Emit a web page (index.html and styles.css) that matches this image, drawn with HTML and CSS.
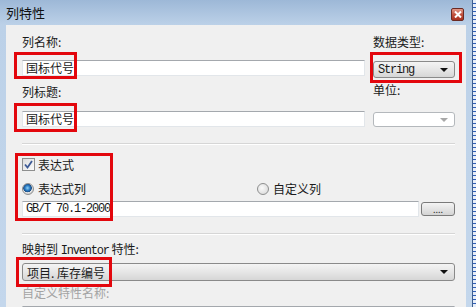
FILE: index.html
```html
<!DOCTYPE html>
<html lang="zh-CN">
<head>
    <meta charset="UTF-8">
    <title>列特性</title>
    <link rel="stylesheet" href="styles.css">
</head>
<body>
    <div class="screen">
        <div class="window">
            <div class="titlebar">
                <span class="title">列特性</span>
                <span class="close">
                    <svg width="8" height="7" viewBox="0 0 8 7"><path d="M1 0.5 L7 6.5 M7 0.5 L1 6.5" stroke="#fff" stroke-width="2"/></svg>
                </span>
            </div>
            <div class="client">
                <div class="top-grid">
                    <div class="col">
                        <div class="label">列名称:</div>
                        <div class="textbox name-box">国标代号</div>
                        <div class="label title-label">列标题:</div>
                        <div class="textbox caption-box">国标代号</div>
                    </div>
                    <div class="col">
                        <div class="label">数据类型:</div>
                        <div class="combo type-combo"><span class="mono">String</span><span class="arrow"></span></div>
                        <div class="label unit-label">单位:</div>
                        <div class="combo disabled unit-combo"><span></span><span class="arrow"></span></div>
                    </div>
                </div>

                <div class="sep"></div>

                <div class="expr">
                    <div class="check-row">
                        <span class="checkbox">
                            <svg width="9" height="9" viewBox="0 0 9 9"><path d="M1 4.5 L3.5 7.5 L8 1" fill="none" stroke="#3d5a96" stroke-width="1.8"/></svg>
                        </span>
                        <span>表达式</span>
                    </div>
                    <div class="radio-row">
                        <div class="radio-item"><span class="radio on"></span><span>表达式列</span></div>
                        <div class="radio-item"><span class="radio"></span><span>自定义列</span></div>
                    </div>
                    <div class="expr-input">
                        <div class="textbox mono">GB/T 70.1-2000</div>
                        <div class="dots-btn">....</div>
                    </div>
                </div>

                <div class="sep second"></div>

                <div class="map">
                    <div class="label">映射到 <span class="mono">Inventor</span> 特性:</div>
                    <div class="combo map-combo"><span>项目. 库存编号</span><span class="arrow"></span></div>
                    <div class="label muted">自定义特性名称:</div>
                    <div class="textbox last-box"></div>
                </div>
            </div>
        </div>
        <div class="behind"></div>

        <div class="mark mark-name"></div>
        <div class="mark mark-caption"></div>
        <div class="mark mark-type"></div>
        <div class="mark mark-expr"></div>
        <div class="mark mark-map"></div>
    </div>
</body>
</html>
```

FILE: styles.css
```css
* {
    margin: 0;
    padding: 0;
    box-sizing: border-box;
}

body {
    width: 476px;
    height: 307px;
    overflow: hidden;
    font-family: "Noto Sans CJK SC", "DejaVu Sans", sans-serif;
    font-size: 12px;
    color: #1a1a1a;
}

.screen {
    position: relative;
    display: flex;
    height: 307px;
}

.window {
    width: 472px;
    padding: 0 6px;
    display: flex;
    flex-direction: column;
    background: linear-gradient(#9db8d7 0, #bcd1e8 25px, #c4d7ec 100%);
}

.titlebar {
    height: 25px;
    display: flex;
    align-items: center;
    justify-content: space-between;
}

.title {
    font-size: 13px;
    color: #111;
    line-height: 16px;
}

.close {
    width: 13px;
    height: 13px;
    margin-right: 2px;
    margin-top: 3px;
    display: flex;
    align-items: center;
    justify-content: center;
    border: 1px solid #6b2a22;
    border-radius: 2px;
    background: linear-gradient(#e29a8a, #c2523f 50%, #a8301f);
}

.client {
    flex: 1;
    background: #f0f0f0;
    padding: 9px 11px 0 16px;
    overflow: hidden;
}

.label {
    height: 16px;
    line-height: 16px;
    white-space: nowrap;
}

.mono {
    font-family: "Liberation Mono", "DejaVu Sans Mono", monospace;
    font-size: 12px;
    letter-spacing: -1.2px;
}

.muted {
    color: #a3a3a3;
}

.top-grid {
    display: grid;
    grid-template-columns: 343px 1fr;
    column-gap: 8px;
}

.col {
    display: flex;
    flex-direction: column;
}

.textbox {
    height: 16px;
    line-height: 14px;
    padding-left: 3px;
    background: #fff;
    border: 1px solid #e2e6ea;
    border-top-color: #a4a8ad;
    white-space: nowrap;
}

.name-box {
    margin-top: 10px;
}

.title-label {
    margin-top: 8px;
}

.caption-box {
    margin-top: 11px;
}

.combo {
    height: 17px;
    display: flex;
    align-items: center;
    justify-content: space-between;
    padding: 0 6px 0 4px;
    border: 1px solid #8a8a8a;
    border-radius: 3px;
    background: linear-gradient(#f4f4f4, #e6e6e6 50%, #d6d6d6);
}

.arrow {
    width: 0;
    height: 0;
    border-left: 4px solid transparent;
    border-right: 4px solid transparent;
    border-top: 4px solid #111;
}

.type-combo {
    margin-top: 11px;
}

.unit-label {
    margin-top: 4px;
}

.unit-combo {
    margin-top: 14px;
    height: 15px;
}

.combo.disabled {
    background: #fff;
    border-color: #b4b8bc;
}

.combo.disabled .arrow {
    border-top-color: #a8a8a8;
}

.sep {
    margin-top: 16px;
    border-top: 1px solid #d6d6d6;
    border-bottom: 1px solid #fff;
}

.expr {
    display: flex;
    flex-direction: column;
}

.check-row {
    margin-top: 13px;
    height: 13px;
    display: flex;
    align-items: center;
    gap: 3px;
    line-height: 13px;
}

.checkbox {
    width: 13px;
    height: 13px;
    display: flex;
    align-items: center;
    justify-content: center;
    border: 1px solid #8e8f8f;
    background: linear-gradient(135deg, #dcdcdc, #fbfbfb);
}

.radio-row {
    margin-top: 11px;
    height: 13px;
    display: grid;
    grid-template-columns: 235px 1fr;
}

.radio-item {
    display: flex;
    align-items: center;
    gap: 4px;
    line-height: 13px;
}

.radio {
    width: 12px;
    height: 12px;
    border-radius: 50%;
    border: 1px solid #8e8f8f;
    background: radial-gradient(circle at 40% 40%, #fafafa, #d4d4d4);
}

.radio.on {
    background: radial-gradient(circle at 45% 40%, #8fd2f6 0, #2a7bc4 2.5px, #1c4f86 4px, #e6e6e6 4.6px, #cfcfcf 6px);
}

.expr-input {
    margin-top: 6px;
    display: flex;
    align-items: center;
    gap: 2px;
}

.expr-input .textbox {
    flex: 1;
    line-height: 15px;
}

.dots-btn {
    width: 34px;
    height: 14px;
    font-size: 9px;
    line-height: 14px;
    text-align: center;
    color: #333;
    border: 1px solid #7a7a7a;
    border-radius: 3px;
    background: linear-gradient(#f4f4f4, #e4e4e4 50%, #d4d4d4);
}

.sep.second {
    margin-top: 16px;
}

.map {
    display: flex;
    flex-direction: column;
}

.map .label:first-child {
    margin-top: 6px;
}

.map-combo {
    margin-top: 6px;
    height: 18px;
}

.map .muted {
    margin-top: 4px;
}

.last-box {
    margin-top: 5px;
}

.behind {
    flex: 1;
    border-left: 1px solid #3f5f8f;
    background: repeating-linear-gradient(#e8eef8 0, #e8eef8 3px, #2f5fb8 3px, #2f5fb8 4px);
}

/* red annotation boxes drawn over the dialog */
.mark {
    position: absolute;
    border: 3px solid #e3070d;
}

.mark-name {
    left: 14px;
    top: 52px;
    width: 63px;
    height: 27px;
}

.mark-caption {
    left: 14px;
    top: 103px;
    width: 63px;
    height: 29px;
}

.mark-type {
    left: 370px;
    top: 52px;
    width: 92px;
    height: 31px;
}

.mark-expr {
    left: 15px;
    top: 153px;
    width: 98px;
    height: 68px;
}

.mark-map {
    left: 16px;
    top: 257px;
    width: 96px;
    height: 30px;
}
```
